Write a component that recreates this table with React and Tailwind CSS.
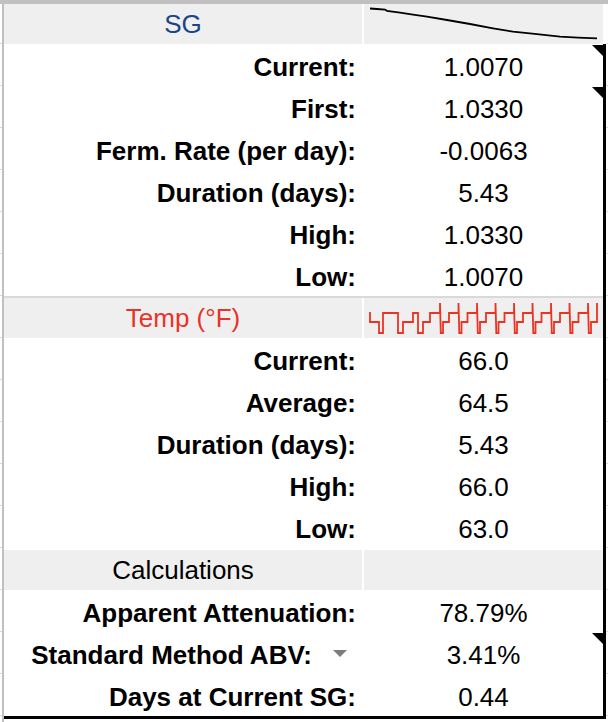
const Tri = () => (
  <svg className="absolute right-0 top-[1px]" width="11" height="11" viewBox="0 0 11 11">
    <polygon points="0,0 11,0 11,11" fill="#000" />
  </svg>
);

const Gutter = () => <div className="w-[2px] border-b border-[#dadada]" />;

const Row = ({ label, value, tri, arrow }) => (
  <div className="flex h-[42px]">
    <Gutter />
    <div className="w-[2px] bg-[#c0c0c0]" />
    <div className="flex w-[358px] items-center justify-end pt-[4px] pr-[6px] text-[26px] font-bold">
      {label}
      {arrow && (
        <svg className="mb-[4px] ml-[21px] mr-[9px]" width="14" height="7" viewBox="0 0 14 7">
          <polygon points="0,0 14,0 7,7" fill="#7c7c7c" />
        </svg>
      )}
    </div>
    <div className="w-[2px]" />
    <div className="relative flex w-[239px] items-center justify-center pt-[4px] text-[26px]">
      {value}
      {tri && <Tri />}
    </div>
    <div className="w-[3px] bg-black" />
    <Gutter />
  </div>
);

const Header = ({ title, color, size, chart, edge }) => (
  <div className="flex h-[40px]">
    <Gutter />
    <div className="w-[2px] bg-[#c0c0c0]" />
    <div className={"flex w-[358px] items-center justify-center bg-[#efefef] " + color + " " + size}>{title}</div>
    <div className="w-[2px]" />
    <div className="w-[239px] bg-[#efefef]">{chart}</div>
    <div className={"w-[3px] " + edge} />
    <Gutter />
  </div>
);

const Rule = ({ fill }) => (
  <div className="flex h-[2px]">
    <div className="w-[2px]" />
    <div className="w-[2px] bg-[#c0c0c0]" />
    <div className={"w-[599px] " + fill} />
    <div className="w-[3px] bg-black" />
    <div className="w-[2px]" />
  </div>
);

const sgLine =
  "370,8.5 377,9 385,9.6 387,10.8 400,12.7 413,14.6 427,16.7 447,20 470,24 493,28.3 513,31.7 537,34.2 560,36.6 578,37.6 597,38.3";

const spikes = [440, 458.5, 477, 495.5, 514, 532.5, 551, 569.5, 588];
let tempLine =
  "M370,312 V322 H379 V333 H383 V313 H398 V333 H403 V322 H413 V313 H418 V333 H423 V322 H430 V313";
spikes.forEach((s) => {
  tempLine += ` H${s} V303 L${s + 0.8},333 H${s + 3} V322 H${s + 9} V313`;
});
tempLine += " H597 V303";

const App = () => {
  return (
    <div className="w-[608px] h-[722px] bg-white text-black font-['Liberation_Sans',Arial,sans-serif]">
      <div className="h-[4px] bg-[#c0c0c0]" />

      <Header
        title="SG"
        color="text-[#1c4587]"
        size="text-[26px]"
        edge="bg-white"
        chart={
          <svg width="239" height="40" viewBox="364 4 239 40">
            <polyline points={sgLine} fill="none" stroke="#000" strokeWidth="1.8" />
          </svg>
        }
      />
      <Row label="Current:" value="1.0070" tri />
      <Row label="First:" value="1.0330" tri />
      <Row label="Ferm. Rate (per day):" value="-0.0063" />
      <Row label="Duration (days):" value="5.43" />
      <Row label="High:" value="1.0330" />
      <Row label="Low:" value="1.0070" />

      <Rule fill="bg-[#d9d9d9]" />
      <Header
        title="Temp (°F)"
        color="text-[#e8322a]"
        size="text-[26px]"
        edge="bg-black"
        chart={
          <svg width="239" height="40" viewBox="364 298 239 40">
            <path d={tempLine} fill="none" stroke="#ea3323" strokeWidth="1.8" />
          </svg>
        }
      />
      <Row label="Current:" value="66.0" />
      <Row label="Average:" value="64.5" />
      <Row label="Duration (days):" value="5.43" />
      <Row label="High:" value="66.0" />
      <Row label="Low:" value="63.0" />

      <Rule fill="bg-white" />
      <Header title="Calculations" color="text-black" size="text-[26px]" edge="bg-black" />
      <Row label="Apparent Attenuation:" value="78.79%" />
      <Row label="Standard Method ABV:" value="3.41%" tri arrow />
      <Row label="Days at Current SG:" value="0.44" />

      <div className="flex h-[3px]">
        <div className="w-[2px]" />
        <div className="w-[2px] bg-[#c0c0c0]" />
        <div className="w-[602px] bg-black" />
        <div className="w-[2px]" />
      </div>
      <div className="flex h-[3px]">
        <div className="w-[2px]" />
        <div className="w-[2px] bg-[#c0c0c0]" />
      </div>
    </div>
  );
};

export default App;
